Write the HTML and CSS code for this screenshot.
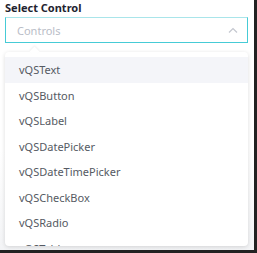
FILE: index.html
```html
<!DOCTYPE html>
<html lang="en">
<head>
  <meta charset="UTF-8">
  <title>Select Control</title>
  <link rel="stylesheet" href="styles.css">
</head>
<body>
  <div class="frame">
    <div class="field">
      <label class="label">Select Control</label>
      <div class="select">
        <span class="placeholder">Controls</span>
        <svg class="chevron" width="10" height="6" viewBox="0 0 10 6">
          <polyline points="1,5.5 5,1.5 9,5.5" fill="none" stroke="#c4c7cf" stroke-width="1.2"/>
        </svg>
      </div>
      <div class="menu">
        <div class="notch"></div>
        <ul class="options">
          <li class="option active">vQSText</li>
          <li class="option">vQSButton</li>
          <li class="option">vQSLabel</li>
          <li class="option">vQSDatePicker</li>
          <li class="option">vQSDateTimePicker</li>
          <li class="option">vQSCheckBox</li>
          <li class="option">vQSRadio</li>
          <li class="option">vQSTable</li>
        </ul>
      </div>
    </div>
  </div>
</body>
</html>
```
FILE: styles.css
```css
body {
  margin: 0;
  font-family: "Noto Sans", Arial, sans-serif;
  background: #fff;
}
.frame {
  width: 254px;
  height: 250px;
  border-right: 3px solid #222;
  border-bottom: 3px solid #222;
  overflow: hidden;
  background: linear-gradient(#fff 60%, #f3f4f6);
}
.field {
  padding: 0 5px 0 5px;
  height: 100%;
  box-sizing: border-box;
}
.label {
  display: block;
  font-size: 11px;
  font-weight: bold;
  color: #1f2430;
  line-height: 13px;
  padding-top: 1px;
  height: 16px;
}
.select {
  display: flex;
  align-items: center;
  justify-content: space-between;
  height: 24px;
  border: 1px solid #46cbd6;
  border-top-color: #a9e5ea;
  padding: 0 9px 0 11px;
  margin-right: 1px;
}
.placeholder {
  font-size: 11px;
  color: #b9bdc7;
}
.chevron {
  margin-top: -1px;
}
.menu {
  position: relative;
  margin-top: 9px;
  margin-right: 1px;
  height: 194px;
  background: #fff;
  border-radius: 4px;
  box-shadow: 0 1px 4px rgba(0, 0, 0, 0.14);
}
.notch {
  position: absolute;
  top: -4px;
  left: 26px;
  width: 7px;
  height: 7px;
  background: #fff;
  transform: rotate(45deg);
  box-shadow: -1px -1px 2px rgba(0, 0, 0, 0.06);
}
.options {
  list-style: none;
  margin: 0;
  padding: 5px 0 0 0;
  position: relative;
  height: 100%;
  box-sizing: border-box;
  overflow: hidden;
  border-radius: 4px;
}
.option {
  height: 25.5px;
  line-height: 25px;
  padding-left: 14px;
  font-size: 11px;
  color: #555a63;
}
.option.active {
  background: #f4f5f9;
}
```
